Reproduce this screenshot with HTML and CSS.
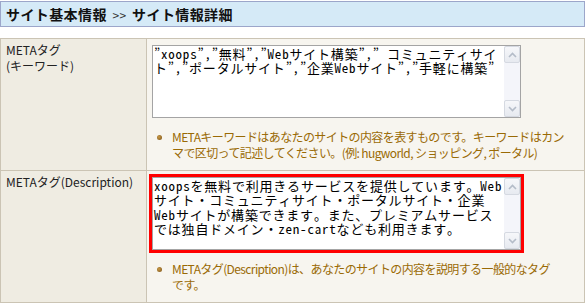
FILE: index.html
```html
<!DOCTYPE html>
<html lang="ja">
  <head>
    <meta charset="UTF-8" />
    <title>サイト情報詳細</title>
    <link rel="stylesheet" href="styles.css">
  </head>
  <body>
    <h1 class="crumb">サイト基本情報 <span class="sep">&gt;&gt;</span> サイト情報詳細</h1>
    <div class="form-table">
      <div class="row">
        <div class="label">METAタグ<br>(キーワード)</div>
        <div class="field">
          <div class="textbox">
            <textarea name="meta_keywords">”xoops”,”無料”,”Webサイト構築”,” コミュニティサイト”,”ポータルサイト”,”企業Webサイト”,”手軽に構築”</textarea>
            <div class="scrollbar">
              <span class="sb-btn"><svg width="9" height="6" viewBox="0 0 9 6"><polyline points="1,5 4.5,1.5 8,5" /></svg></span>
              <span class="sb-track"></span>
              <span class="sb-btn"><svg width="9" height="6" viewBox="0 0 9 6"><polyline points="1,1 4.5,4.5 8,1" /></svg></span>
            </div>
          </div>
          <ul class="hint">
            <li><span>METAキーワードはあなたのサイトの内容を表すものです。キーワードはカン<br>マで区切って記述してください。(例: hugworld, ショッピング, ポータル)</span></li>
          </ul>
        </div>
      </div>
      <div class="row">
        <div class="label">METAタグ(Description)</div>
        <div class="field">
          <div class="textbox alert">
            <textarea name="meta_description">xoopsを無料で利用きるサービスを提供しています。Webサイト・コミュニティサイト・ポータルサイト・企業Webサイトが構築できます。また、プレミアムサービスでは独自ドメイン・zen-cartなども利用きます。</textarea>
            <div class="scrollbar">
              <span class="sb-btn"><svg width="9" height="6" viewBox="0 0 9 6"><polyline points="1,5 4.5,1.5 8,5" /></svg></span>
              <span class="sb-track"></span>
              <span class="sb-btn"><svg width="9" height="6" viewBox="0 0 9 6"><polyline points="1,1 4.5,4.5 8,1" /></svg></span>
            </div>
          </div>
          <ul class="hint">
            <li><span>METAタグ(Description)は、あなたのサイトの内容を説明する一般的なタグ<br>です。</span></li>
          </ul>
        </div>
      </div>
    </div>
  </body>
</html>
```

FILE: styles.css
```css
body {
  margin: 0;
  background: #fff;
  font-family: "Noto Sans CJK JP", sans-serif;
  color: #222;
}
.crumb {
  margin: 1px 0 11px;
  height: 26px;
  box-sizing: border-box;
  padding: 0 5px;
  border: 1px solid #9ca6ca;
  background: #d5eaf7;
  font-size: 14px;
  font-weight: bold;
  line-height: 24px;
  color: #111;
  letter-spacing: 0.4px;
}
.crumb .sep {
  font-size: 12px;
  font-weight: normal;
  color: #333;
  margin: 0 2px;
}
.form-table {
  border: 1px solid #cbc4b4;
}
.row {
  display: grid;
  grid-template-columns: 146px 1fr;
}
.row + .row {
  border-top: 1px solid #cbc4b4;
}
.label {
  background: #efece2;
  border-right: 1px solid #cbc4b4;
  padding: 3px 5px;
  font-size: 12px;
  line-height: 16px;
}
.field {
  background: #f7f5ef;
  padding: 6px 5px 9px;
}
.textbox {
  display: flex;
  width: 369px;
  height: 73px;
  box-sizing: border-box;
  border: 1px solid #a4a4a4;
  background: #fff;
}
.textbox.alert {
  outline: 3px solid #f00;
}
.textbox textarea {
  flex: 1;
  min-width: 0;
  margin: 0;
  padding: 1px 0 0 1px;
  border: none;
  outline: none;
  resize: none;
  overflow: hidden;
  background: #fff;
  color: #000;
  font-family: "Noto Sans Mono CJK JP", "Noto Sans CJK JP", monospace;
  font-size: 13px;
  line-height: 14.3px;
  letter-spacing: 0.8px;
}
.scrollbar {
  display: flex;
  flex-direction: column;
  width: 16px;
  background: #f4f5fa;
}
.sb-btn {
  display: flex;
  align-items: center;
  justify-content: center;
  height: 17px;
  box-sizing: border-box;
  border: 1px solid #d5d9e1;
  border-radius: 2px;
  background: linear-gradient(#f6f7fa, #e7eaf0);
}
.sb-btn polyline {
  fill: none;
  stroke: #b4bcc8;
  stroke-width: 1.6;
}
.sb-track {
  flex: 1;
}
.hint {
  margin: 11px 0 0;
  padding: 0 0 0 5px;
  list-style: none;
  font-size: 12px;
  line-height: 16px;
  color: #9a6a05;
  letter-spacing: -0.6px;
}
.hint li {
  display: flex;
}
.hint li::before {
  content: "";
  flex: none;
  width: 5px;
  height: 5px;
  margin: 6px 10px 0 0;
  border-radius: 50%;
  background: radial-gradient(circle at 40% 40%, #c99a48, #7a5012);
}
```
